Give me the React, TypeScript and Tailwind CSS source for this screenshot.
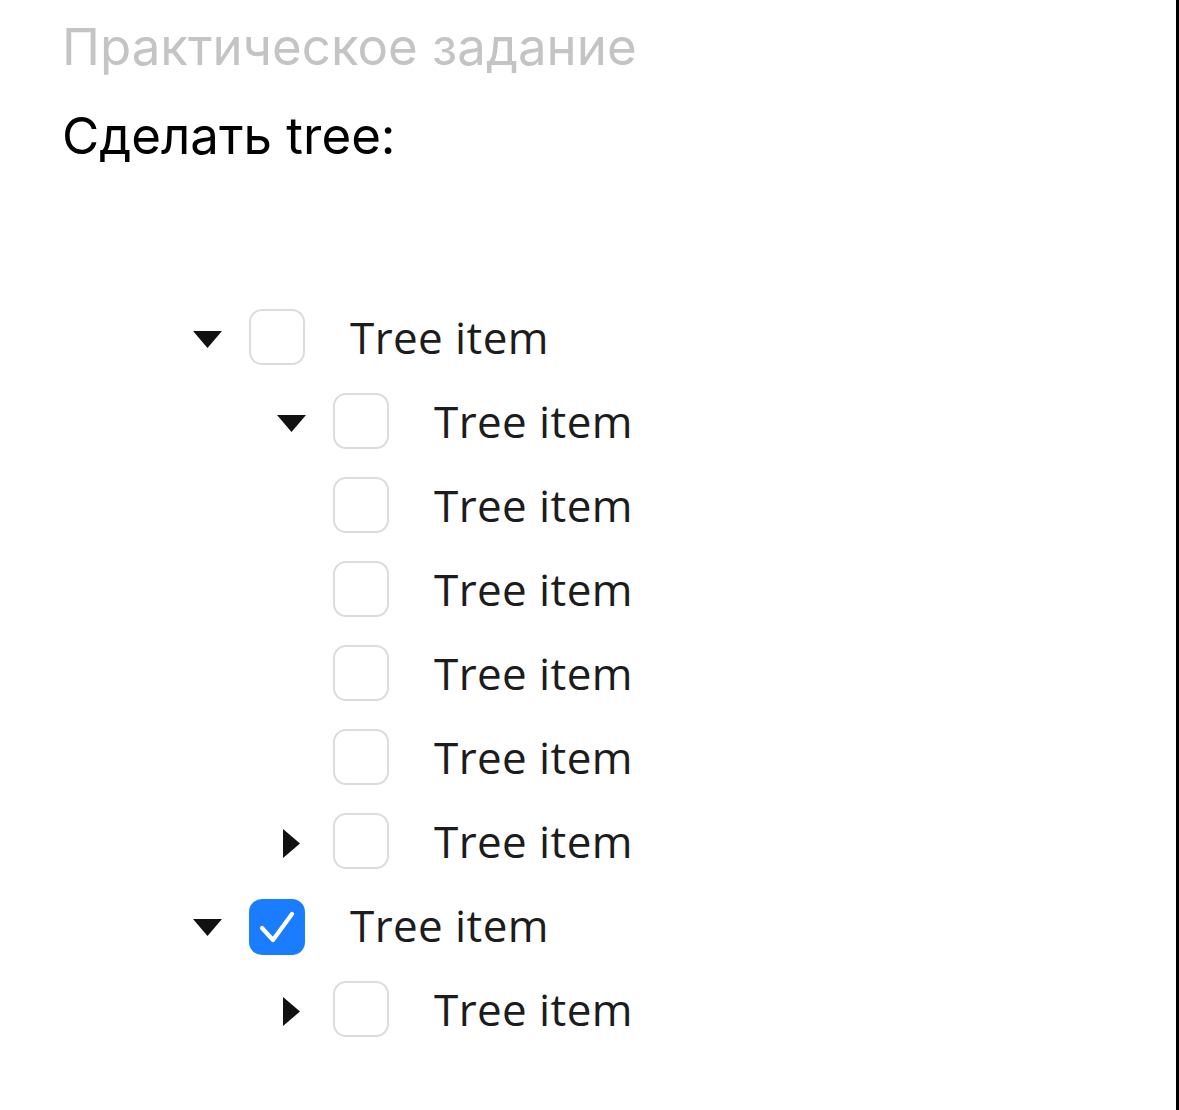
import { useState } from 'react';

interface TreeNode {
  id: number;
  label: string;
  level: number;
  arrow?: 'down' | 'right';
  checked?: boolean;
}

const nodes: TreeNode[] = [
  { id: 1, label: 'Tree item', level: 0, arrow: 'down' },
  { id: 2, label: 'Tree item', level: 1, arrow: 'down' },
  { id: 3, label: 'Tree item', level: 1 },
  { id: 4, label: 'Tree item', level: 1 },
  { id: 5, label: 'Tree item', level: 1 },
  { id: 6, label: 'Tree item', level: 1 },
  { id: 7, label: 'Tree item', level: 1, arrow: 'right' },
  { id: 8, label: 'Tree item', level: 0, arrow: 'down', checked: true },
  { id: 9, label: 'Tree item', level: 1, arrow: 'right' },
];

function Arrow({ dir }: { dir?: 'down' | 'right' }) {
  return (
    <div className="w-[29px] h-[29px] flex items-center justify-center shrink-0">
      {dir === 'down' && (
        <svg width="29" height="17" viewBox="0 0 29 17">
          <path d="M0 0h29L14.5 17z" fill="#111" />
        </svg>
      )}
      {dir === 'right' && (
        <svg width="17" height="29" viewBox="0 0 17 29">
          <path d="M0 0v29l17-14.5z" fill="#111" />
        </svg>
      )}
    </div>
  );
}

function Checkbox({ checked, onClick }: { checked: boolean; onClick: () => void }) {
  return (
    <button
      onClick={onClick}
      className={
        checked
          ? 'w-[56px] h-[56px] rounded-[13px] bg-[#1a7dff] flex items-center justify-center shrink-0'
          : 'w-[56px] h-[56px] rounded-[13px] border-2 border-[#dcdcdc] bg-white shrink-0'
      }
    >
      {checked && (
        <svg width="36" height="32" viewBox="0 0 36 32" fill="none">
          <path d="M3 17l11 12L33 3" stroke="#fff" strokeWidth="4.2" strokeLinecap="round" strokeLinejoin="round" />
        </svg>
      )}
    </button>
  );
}

export default function App() {
  const [checked, setChecked] = useState<Record<number, boolean>>({ 8: true });

  return (
    <div className="min-h-[1110px] w-full bg-white border-r-[3px] border-black">
      <div className="pl-[62px] pt-[22px] font-['Inter',sans-serif]">
        <h2 className="text-[51px] leading-[50px] text-[#c4c4c4]">Практическое задание</h2>
        <p className="mt-[39px] text-[51px] leading-[50px] text-black">Сделать tree:</p>
      </div>

      <div className="mt-[136px] pl-[193px] flex flex-col">
        {nodes.map((node) => (
          <div
            key={node.id}
            className={node.level === 1 ? 'h-[84px] flex items-center pl-[84px]' : 'h-[84px] flex items-center'}
          >
            <Arrow dir={node.arrow} />
            <div className="ml-[27px]">
              <Checkbox
                checked={!!checked[node.id]}
                onClick={() => setChecked((c) => ({ ...c, [node.id]: !c[node.id] }))}
              />
            </div>
            <span className="ml-[45px] pb-[5px] text-[44px] leading-none tracking-[0.4px] text-[#1c1c1c] font-['Open_Sans',sans-serif]">
              {node.label}
            </span>
          </div>
        ))}
      </div>
    </div>
  );
}
